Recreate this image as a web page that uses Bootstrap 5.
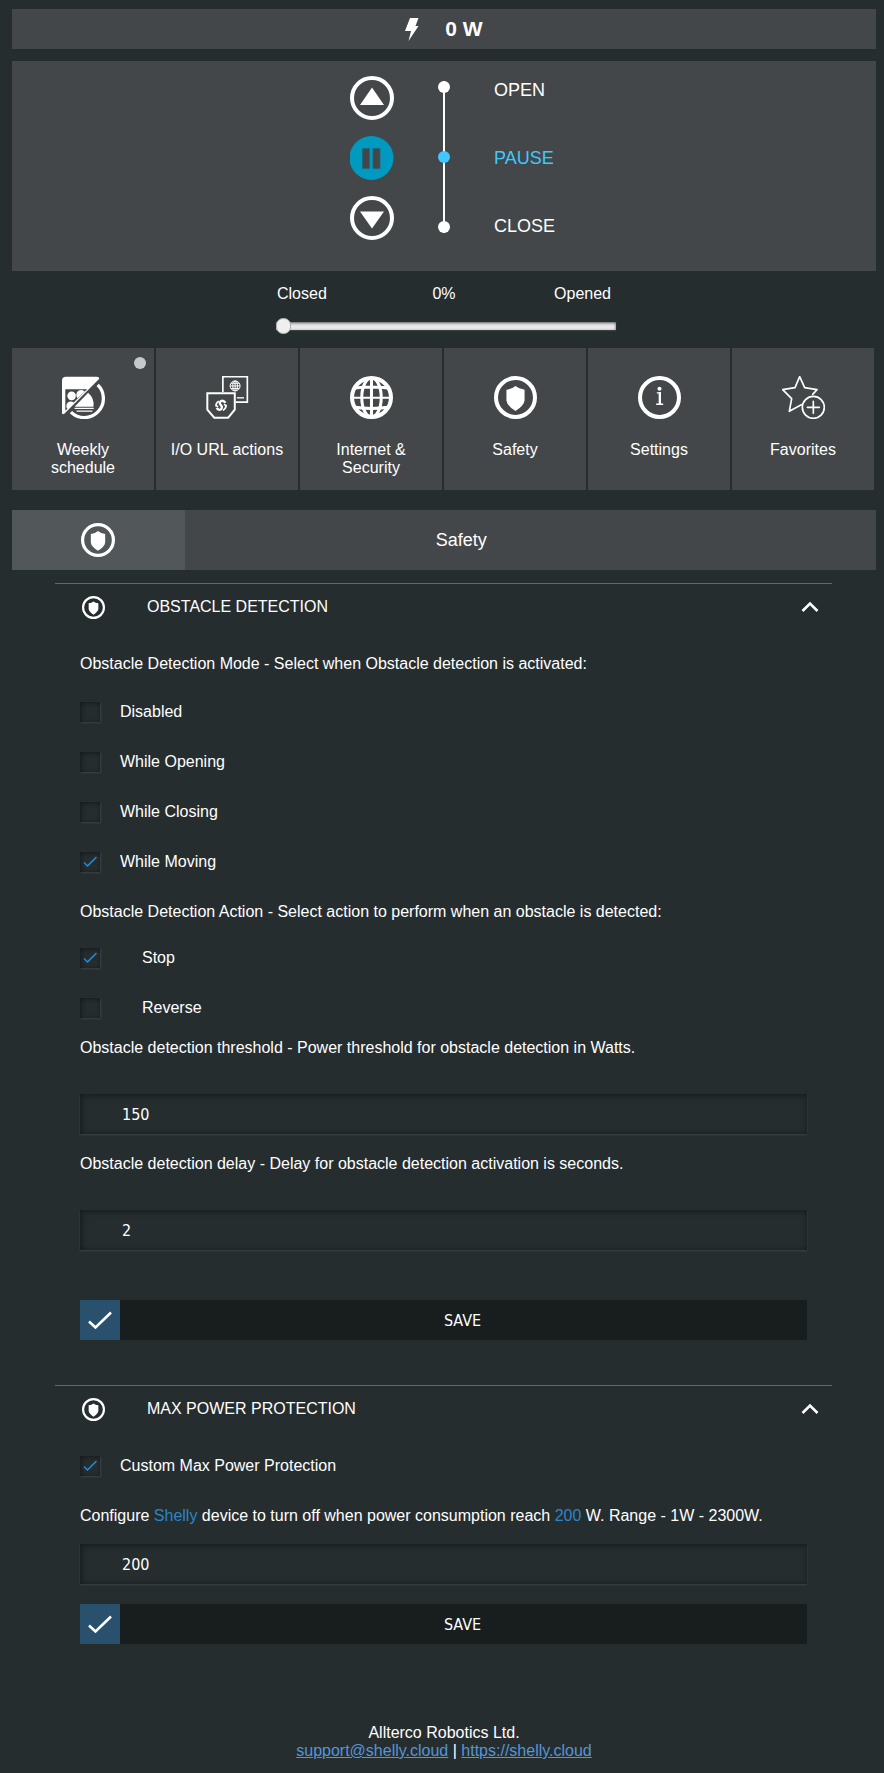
<!DOCTYPE html>
<html lang="en">
<head>
<meta charset="utf-8">
<meta name="viewport" content="width=device-width, initial-scale=1">
<title>Shelly - Safety</title>
<link href="https://cdn.jsdelivr.net/npm/bootstrap@5.3.0/dist/css/bootstrap.min.css" rel="stylesheet">
<style>
:root { --panel: #434749; --page: #262d2f; --blue: #2a86c8; }
body { background: var(--page); color: #fff; font-family: "Liberation Sans", Arial, sans-serif; font-size: 16px; line-height: 18px; padding: 9px 8px 12px 12px; }
button { font: inherit; color: inherit; background: none; border: 0; padding: 0; }
svg { display: block; flex: none; }
h1, h2, p { margin: 0; font-size: 16px; line-height: 18px; font-weight: 400; }
.panel { background: var(--panel); }
.power { height: 40px; margin-bottom: 12px; gap: 26px; font-size: 21px; font-weight: 700; }
.controls { display: grid; grid-template-columns: 1fr 12px 1fr; column-gap: 44px; padding: 15px 0 31px; font-size: 18px; line-height: 20px; }
.rail { height: 152px; margin-top: 5px; background: linear-gradient(#fff, #fff) center / 2px 100% no-repeat; }
.rail i { width: 12px; height: 12px; border-radius: 50%; background: #fff; }
.rail i.now { background: #3fc8ff; }
.states { gap: 48px; padding-top: 4px; }
.states .now { color: #3fc8ff; }
.position { width: 340px; max-width: 100%; padding-top: 14px; margin-bottom: 14px; }
.scale { display: grid; grid-template-columns: 1fr auto 1fr; padding: 0 5px 0 1px; margin-bottom: 15px; }
.slide { -webkit-appearance: none; appearance: none; display: block; width: 100%; height: 16px; margin: 0; background: none; }
.slide::-webkit-slider-runnable-track { height: 8px; background: #e8e8e8; box-shadow: inset 0 1px 3px #555, 0 1px 1px #3b4340; }
.slide::-webkit-slider-thumb { -webkit-appearance: none; width: 15px; height: 16px; margin-top: -4px; border-radius: 7px; border: 1px solid #aaa; background: #efefef; }
.tiles { display: grid; grid-template-columns: repeat(6, 1fr); gap: 2px; padding-right: 2px; margin-bottom: 20px; }
.tile { background: var(--panel); min-height: 142px; padding: 28px 12px 12px; gap: 22px; }
.tile .dot { position: absolute; top: 9px; right: 8px; width: 12px; height: 12px; border-radius: 50%; background: #c7c8c9; }
.titlebar { display: grid; grid-template-columns: 20% 64% 16%; height: 60px; margin-bottom: 13px; }
.titlebar .mark-cell { background: #525759; }
.titlebar h1 { font-size: 18px; line-height: 20px; }
.block { margin: 0 44px 0 43px; border-top: 1px solid #62686a; }
.block-head { width: 100%; height: 46px; padding: 0 13px 0 27px; margin-bottom: 24px; }
.block-head span { margin-left: 42px; }
.block-body { padding: 0 25px; margin-bottom: 45px; }
.block-body p { padding-top: 1px; }
.opts { display: grid; gap: 30px; margin: 29px 0 30px; }
.opts.actions { margin: 27px 0 21px; }
.opt { gap: 20px; height: 20px; }
.actions .opt { gap: 42px; }
.tick { -webkit-appearance: none; appearance: none; width: 20px; height: 20px; margin: 0; flex: none; box-shadow: inset 1px 1px 5px #14191a, 1px 1px 2px #3c4346; }
.tick:checked { background: url("data:image/svg+xml,%3Csvg xmlns='http://www.w3.org/2000/svg' viewBox='0 0 20 20'%3E%3Cpath d='M4 10.500l3.500 3.500 9-9' fill='none' stroke='%232391dc' stroke-width='1.500'/%3E%3C/svg%3E"); }
.field { display: block; width: 100%; height: 40px; border: 0; padding: 1px 42px 0; background: none; color: #fff; font: 16px/18px "DejaVu Sans Condensed", "DejaVu Sans", sans-serif; box-shadow: inset 1px 1px 6px #14191a, 0 1px 2px #3c4346; }
.hint { display: block; margin: 21px 0 37px; }
.limit { display: block; margin: 31px 0 19px; }
.save { width: 100%; background: #181d1d; font: 16px/18px "DejaVu Sans Condensed", "DejaVu Sans", sans-serif; }
.save svg { background: #29506c; }
.save span { padding: 2px 2px 0 0; }
.save-far { margin-top: 50px; }
.save-near { margin-top: 20px; }
.blue { color: var(--blue); }
footer { padding-top: 35px; }
footer a { color: #5596d6; }
</style>
</head>
<body>
<svg width="0" height="0" class="position-absolute" aria-hidden="true">
  <symbol id="shield" viewBox="0 0 128 128">
    <circle cx="64" cy="64" r="58" fill="none" stroke="#fff" stroke-width="12"/>
    <path fill="#fff" d="M37 41q17-2 27-11q10 9 27 11v32q-2 16-27 31q-25-15-27-31z"/>
  </symbol>
  <symbol id="chevron" viewBox="0 0 18 12"><path d="M1.500 10L9 2.500 16.500 10" fill="none" stroke="#fff" stroke-width="2.600"/></symbol>
  <symbol id="check" viewBox="0 0 40 40"><path d="M9 21.500l6.500 6L31 12.500" fill="none" stroke="#fff" stroke-width="2.600"/></symbol>
</svg>

<header class="panel power d-flex align-items-center justify-content-center">
  <svg width="14" height="23" viewBox="0 0 14 23"><path fill="#fff" d="M5 0h8.500l-3 8H13.500L3.500 23 6 13H0z"/></svg>
  <span>0 W</span>
</header>

<section class="panel controls">
  <div class="d-flex flex-column align-items-end gap-3">
    <button type="button" aria-label="Open"><svg width="44" height="44" viewBox="0 0 44 44"><circle cx="22" cy="22" r="20" fill="none" stroke="#fff" stroke-width="4"/><path fill="#fff" d="M22 11.500L34 29H10z"/></svg></button>
    <button type="button" aria-label="Pause"><svg width="44" height="44" viewBox="0 0 44 44"><circle cx="21.500" cy="22" r="22" fill="#0099bf"/><path fill="#434749" stroke="#23677a" d="M12.500 12.500h7v20h-7zM23 12.500h7v20h-7z"/></svg></button>
    <button type="button" aria-label="Close"><svg width="44" height="44" viewBox="0 0 44 44"><circle cx="22" cy="22" r="20" fill="none" stroke="#fff" stroke-width="4"/><path fill="#fff" d="M22 32.500L34 15.500H10z"/></svg></button>
  </div>
  <div class="rail d-flex flex-column justify-content-between"><i></i><i class="now"></i><i></i></div>
  <div class="states d-flex flex-column"><span>OPEN</span><span class="now">PAUSE</span><span>CLOSE</span></div>
</section>

<section class="ps-1">
  <div class="position mx-auto">
    <div class="scale"><span>Closed</span><label for="pos">0%</label><span class="text-end">Opened</span></div>
    <input class="slide" id="pos" type="range" min="0" max="100" value="0">
  </div>
</section>

<nav class="tiles">
  <button type="button" class="tile d-flex flex-column align-items-center position-relative">
    <span class="dot"></span>
    <svg width="43" height="43" viewBox="186 110 130 130">
      <path fill="#fff" fill-rule="evenodd" d="M186 124q0-12 12-12h92q10 0 8 7L193 224q-7 4-7-3zM196 150v65l66-65z"/>
      <path fill="#fff" d="M202 170a13 13 0 1 1 26 0a13 13 0 1 1-26 0M233 177a13 13 0 0 1 22-20zM203 210a13 13 0 0 1 19-19z"/>
      <path fill="none" stroke="#fff" stroke-width="10" d="M294 137a57 57 0 0 1-81 82"/>
      <path fill="#fff" d="M265 161q20 18 16 42h-57z"/>
      <path stroke="#fff" stroke-width="4" d="M224 208h58M230 216h48"/>
    </svg>
    <span>Weekly schedule</span>
  </button>
  <button type="button" class="tile d-flex flex-column align-items-center">
    <svg width="43" height="43" viewBox="618 108 130 130" fill="none" stroke="#fff">
      <path stroke-width="5" d="M669 156v-46h74v77h-36"/>
      <path stroke-width="6" d="M622 160h83v50l-20 24h-42l-21-24z"/>
      <g stroke-width="3"><circle cx="706" cy="138" r="15"/><ellipse cx="706" cy="138" rx="7" ry="15"/><path d="M706 123v30M691 138h30M694 130h24M694 146h24"/></g>
      <path stroke-width="4" d="M711 174h22"/>
      <path stroke-width="7" d="M677 189q-7-9-14-5q-7 6 0 12q6 6 0 13q-6 4-13-4"/>
      <path stroke-width="5" d="M657 184q-9 5-9 14l7 3M669 212q9-5 10-15l-7-3"/>
    </svg>
    <span>I/O URL actions</span>
  </button>
  <button type="button" class="tile d-flex flex-column align-items-center">
    <svg width="43" height="43" viewBox="0 0 128 128" fill="none" stroke="#fff">
      <circle cx="64" cy="64" r="58" stroke-width="12"/><ellipse cx="64" cy="64" rx="29" ry="58" stroke-width="9"/>
      <path stroke-width="9" d="M64 4v120M14 36q50-7 100 0M14 93q50 7 100 0"/><path stroke-width="6" d="M4 65h120"/>
    </svg>
    <span>Internet &amp; Security</span>
  </button>
  <button type="button" class="tile d-flex flex-column align-items-center">
    <svg width="43" height="43"><use href="#shield"/></svg>
    <span>Safety</span>
  </button>
  <button type="button" class="tile d-flex flex-column align-items-center">
    <svg width="43" height="43" viewBox="0 0 128 128" fill="none" stroke="#fff">
      <circle cx="64" cy="64" r="58" stroke-width="12"/><circle cx="64" cy="38" r="6" fill="#fff" stroke="none"/>
      <path stroke-width="7" d="M65 48v36"/><path stroke-width="4" d="M56 50h12M54 84h21"/>
    </svg>
    <span>Settings</span>
  </button>
  <button type="button" class="tile d-flex flex-column align-items-center">
    <svg width="43" height="43" viewBox="606 108 129 129" fill="none" stroke="#fff" stroke-width="5" stroke-linejoin="round" stroke-linecap="round">
      <path d="M664 194l-36 20 7-38-27-27 37-6 14-33 15 33 37 6-13 14"/><circle cx="700" cy="202" r="33"/><path d="M682 202h36M700 184v36"/>
    </svg>
    <span>Favorites</span>
  </button>
</nav>

<main>
  <div class="titlebar panel align-items-center">
    <div class="mark-cell h-100 d-flex align-items-center justify-content-center"><svg width="34" height="34"><use href="#shield"/></svg></div>
    <h1 class="text-center">Safety</h1>
  </div>

  <section class="block">
    <h2><button type="button" class="block-head d-flex align-items-center" aria-expanded="true">
      <svg width="23" height="23"><use href="#shield"/></svg><span>OBSTACLE DETECTION</span><svg class="ms-auto" width="18" height="12"><use href="#chevron"/></svg>
    </button></h2>
    <form class="block-body" onsubmit="return false">
      <p>Obstacle Detection Mode - Select when Obstacle detection is activated:</p>
      <div class="opts">
        <div class="opt d-flex align-items-center"><input class="tick" type="checkbox" id="m0"><label for="m0">Disabled</label></div>
        <div class="opt d-flex align-items-center"><input class="tick" type="checkbox" id="m1"><label for="m1">While Opening</label></div>
        <div class="opt d-flex align-items-center"><input class="tick" type="checkbox" id="m2"><label for="m2">While Closing</label></div>
        <div class="opt d-flex align-items-center"><input class="tick" type="checkbox" id="m3" checked><label for="m3">While Moving</label></div>
      </div>
      <p>Obstacle Detection Action - Select action to perform when an obstacle is detected:</p>
      <div class="opts actions">
        <div class="opt d-flex align-items-center"><input class="tick" type="checkbox" id="a0" checked><label for="a0">Stop</label></div>
        <div class="opt d-flex align-items-center"><input class="tick" type="checkbox" id="a1"><label for="a1">Reverse</label></div>
      </div>
      <label class="hint" for="threshold">Obstacle detection threshold - Power threshold for obstacle detection in Watts.</label>
      <input class="field" id="threshold" type="text" value="150">
      <label class="hint" for="delay">Obstacle detection delay - Delay for obstacle detection activation is seconds.</label>
      <input class="field" id="delay" type="text" value="2">
      <button type="submit" class="save save-far d-flex align-items-center"><svg width="40" height="40"><use href="#check"/></svg><span class="flex-fill">SAVE</span></button>
    </form>
  </section>

  <section class="block">
    <h2><button type="button" class="block-head d-flex align-items-center" aria-expanded="true">
      <svg width="23" height="23"><use href="#shield"/></svg><span>MAX POWER PROTECTION</span><svg class="ms-auto" width="18" height="12"><use href="#chevron"/></svg>
    </button></h2>
    <form class="block-body" onsubmit="return false">
      <div class="opt d-flex align-items-center"><input class="tick" type="checkbox" id="custom" checked><label for="custom">Custom Max Power Protection</label></div>
      <label class="limit" for="maxpower">Configure <span class="blue">Shelly</span> device to turn off when power consumption reach <span class="blue">200</span> W. Range - 1W - 2300W.</label>
      <input class="field" id="maxpower" type="text" value="200">
      <button type="submit" class="save save-near d-flex align-items-center"><svg width="40" height="40"><use href="#check"/></svg><span class="flex-fill">SAVE</span></button>
    </form>
  </section>
</main>

<footer class="text-center">
  Allterco Robotics Ltd.<br>
  <a href="mailto:support@shelly.cloud">support@shelly.cloud</a> | <a href="https://shelly.cloud">https://shelly.cloud</a>
</footer>
<script src="https://cdn.jsdelivr.net/npm/bootstrap@5.3.0/dist/js/bootstrap.bundle.min.js"></script>
</body>
</html>
